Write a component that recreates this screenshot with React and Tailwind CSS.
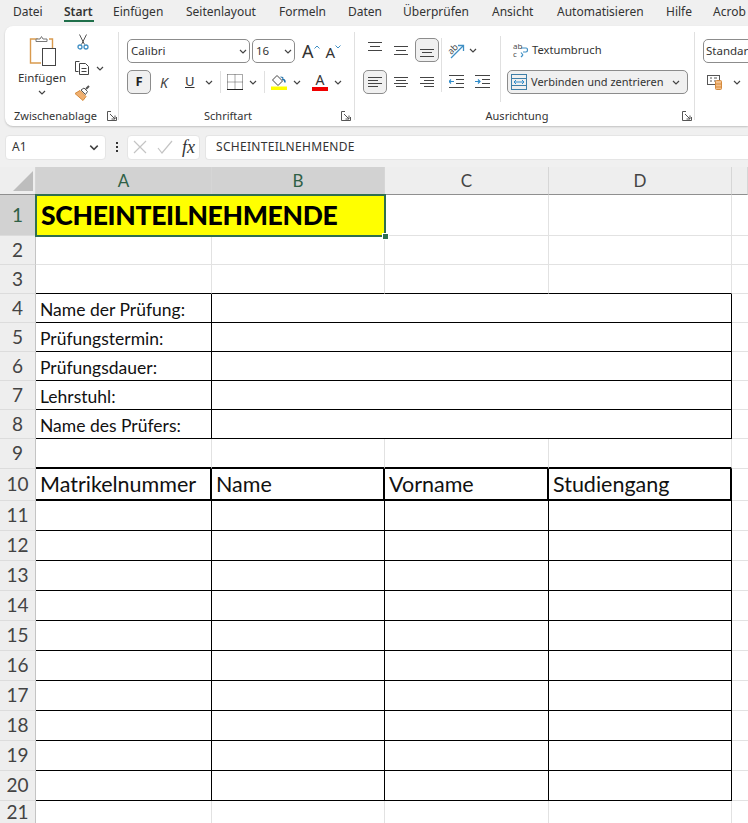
const TABS = [
  ["Datei", "w-[51px]"],
  ["Start", "w-[49px]"],
  ["Einfügen", "w-[73px]"],
  ["Seitenlayout", "w-[93px]"],
  ["Formeln", "w-[69px]"],
  ["Daten", "w-[55px]"],
  ["Überprüfen", "w-[89px]"],
  ["Ansicht", "w-[65px]"],
  ["Automatisieren", "w-[109px]"],
  ["Hilfe", "w-[47px]"],
  ["Acrob", "w-[35px]"],
];

const ROW_HEIGHTS = [41, 29, 29, 29, 29, 29, 29, 29, 30, 32, 30, 30, 30, 30, 30, 30, 30, 30, 30, 30, 23];

const Chevron = ({ className = "" }) => (
  <svg viewBox="0 0 8 5" className={`w-[8px] h-[5px] shrink-0 ${className}`} fill="none" stroke="#444" strokeWidth="1.2">
    <path d="M1 1l3 3 3-3" />
  </svg>
);

const Divider = ({ className = "" }) => <div className={`w-px bg-[#e0e0e0] ${className}`} />;

const Launcher = () => (
  <svg viewBox="0 0 10 10" className="w-[10px] h-[10px]" fill="none" stroke="#555" strokeWidth="1">
    <path d="M4 .5H.5v9h9V6" />
    <path d="M3 3l5 5M8 4.5V8H4.5" />
  </svg>
);

const Lines = ({ rows }) => (
  <svg viewBox="0 0 16 16" className="w-[16px] h-[16px]" stroke="#444" strokeWidth="1" fill="none">
    {rows.map((r, i) => (
      <path key={i} d={`M${r[0]} ${r[2]}.5H${r[1]}`} />
    ))}
  </svg>
);

const PasteIcon = () => (
  <svg viewBox="0 0 30 32" className="w-[30px] h-[32px]" fill="none">
    <path d="M9 4H1.5v24H12" stroke="#d99a4e" strokeWidth="1.4" />
    <path d="M20 4h3.5v9" stroke="#d99a4e" strokeWidth="1.4" />
    <path d="M7 6.5V4h4l1.5-2.500 1.500 2.500h4v2.500z" fill="#fff" stroke="#777" strokeWidth="1" />
    <rect x="13.500" y="13.500" width="13" height="17" fill="#fff" stroke="#444" />
  </svg>
);

const Scissors = () => (
  <svg viewBox="0 0 12 16" className="w-[12px] h-[16px]" fill="none">
    <path d="M2.500 .5l5 10M9.500 .5l-5 10" stroke="#555" strokeWidth="1" />
    <circle cx="3" cy="13" r="2" stroke="#3f8fc4" strokeWidth="1.300" />
    <circle cx="9" cy="13" r="2" stroke="#3f8fc4" strokeWidth="1.300" />
  </svg>
);

const CopyIcon = () => (
  <svg viewBox="0 0 16 16" className="w-[16px] h-[16px]" fill="none" stroke="#444" strokeWidth="1">
    <path d="M5.500 1.500h-4v10h3" />
    <path d="M5.500 3.500h6l3 3v8h-9z" fill="#fff" />
    <path d="M7.500 8.500h5M7.500 11.500h5" />
  </svg>
);

const BrushIcon = () => (
  <svg viewBox="0 0 17 16" className="w-[17px] h-[16px]" fill="none">
    <path d="M1 8.500l5-3 6 6-3 4z" fill="#f0b070" stroke="#d58a3c" />
    <path d="M7 5l3-2 3.500 3.500-2 3z" fill="#fff" stroke="#555" />
    <path d="M12 4l3-3" stroke="#555" strokeWidth="2" />
  </svg>
);

const BorderIcon = () => (
  <svg viewBox="0 0 16 16" className="w-[16px] h-[16px]" fill="none">
    <path d="M.5.5h15v15M.5.5v15M8 .5v15M.5 8h15" stroke="#555" strokeDasharray="1 1" />
    <path d="M0 15.500h16" stroke="#222" />
  </svg>
);

const FillIcon = () => (
  <svg viewBox="0 0 16 16" className="w-[16px] h-[16px]" fill="none">
    <path d="M6 1.500l5.500 5.500-4.500 4.500-5.500-5.500z" stroke="#444" />
    <path d="M12 5.500c1 0 2 1 2 3" stroke="#1f6fa8" strokeWidth="1.500" />
    <path d="M9.500 3l2.500.5-.5 2.500" stroke="#1f6fa8" />
    <rect y="12.500" width="16" height="3.500" fill="#ffff00" />
  </svg>
);

const OrientIcon = () => (
  <svg viewBox="0 0 17 17" className="w-[17px] h-[17px] overflow-visible" fill="none">
    <path d="M3 16L15 4" stroke="#3f8fc4" strokeWidth="1.300" />
    <path d="M10 3.500h5.500V9" stroke="#3f8fc4" strokeWidth="1.300" />
    <text x="0" y="11" fontSize="9" fill="#444" transform="rotate(-45 4 8)" fontFamily="Open Sans, sans-serif">ab</text>
  </svg>
);

const WrapIcon = () => (
  <svg viewBox="0 0 16 16" className="w-[16px] h-[16px] overflow-visible" fill="none">
    <path d="M10 10h3c2 0 2-4 0-4H8M10 13l-2-2.500M10 13l-2 2" stroke="#3f8fc4" strokeWidth="1.200" />
    <text x="0" y="7" fontSize="8" fill="#444" fontFamily="Open Sans, sans-serif">ab</text>
    <text x="0" y="15" fontSize="8" fill="#444" fontFamily="Open Sans, sans-serif">c</text>
  </svg>
);

const IndentIcon = ({ flip }) => (
  <svg viewBox="0 0 15 14" className="w-[15px] h-[14px]" fill="none" stroke="#444">
    <path d="M0 .5h15M7 4.500h8M7 8.500h8M0 12.500h15" />
    {flip ? (
      <path d="M0 6.500h5M3 4.500l2 2-2 2" stroke="#2f8ccb" strokeWidth="1.200" />
    ) : (
      <path d="M5 6.500H0M2 4.500l-2 2 2 2" stroke="#2f8ccb" strokeWidth="1.200" />
    )}
  </svg>
);

const MergeIcon = () => (
  <svg viewBox="0 0 16 16" className="w-[16px] h-[16px]" fill="none">
    <rect x=".5" y=".5" width="15" height="15" stroke="#3f7fa8" />
    <path d="M.5 4.500h15M.5 11.500h15" stroke="#3f7fa8" />
    <path d="M3 8h10M5 6L3 8l2 2M11 6l2 2-2 2" stroke="#2f8ccb" />
  </svg>
);

const StylesIcon = () => (
  <svg viewBox="0 0 16 16" className="w-[16px] h-[16px]" fill="none">
    <rect x=".5" y="1.500" width="12" height="9" fill="#fff" stroke="#555" />
    <path d="M3 4h2M3 7h2M7 4h3M7 7h2" stroke="#555" />
    <rect x="8.500" y="6.500" width="6" height="9" rx="1" fill="#f5c08a" stroke="#d58a3c" />
    <path d="M8.500 10h6M8.500 13h6" stroke="#d58a3c" />
  </svg>
);

const Ribbon = () => (
  <div className="flex h-[100px] ml-[5px] bg-white rounded-l-lg shadow-[0_1px_2px_rgba(0,0,0,0.2)] text-[#333]">
    {/* Zwischenablage */}
    <div className="flex flex-col w-[113px] shrink-0">
      <div className="flex h-[81px] pt-[8px] pl-[13px]">
        <div className="flex flex-col items-center w-[48px]">
          <div className="mt-[1px] ml-[3px]">
            <PasteIcon />
          </div>
          <span className="text-[11.5px] leading-[16px] mt-[3px] whitespace-nowrap">Einfügen</span>
          <Chevron className="mt-[4px]" />
        </div>
        <div className="flex flex-col ml-[8px] gap-[10px]">
          <div className="ml-[3px]"><Scissors /></div>
          <div className="flex items-center gap-[6px]">
            <CopyIcon />
            <Chevron />
          </div>
          <div className="mt-[-1px]"><BrushIcon /></div>
        </div>
      </div>
      <div className="flex items-center justify-between pl-[9px] pr-[1px]">
        <span className="text-[11px] leading-[18px]">Zwischenablage</span>
        <Launcher />
      </div>
    </div>
    <Divider className="h-[88px] mt-[6px]" />

    {/* Schriftart */}
    <div className="flex flex-col w-[235px] shrink-0">
      <div className="flex flex-col h-[81px] pt-[13px] pl-[8px]">
        <div className="flex items-center h-[24px]">
          <div className="flex items-center justify-between w-[123px] h-[24px] border border-[#8c8c8c] rounded-[5px] pl-[3px] pr-[2px] text-[11.5px]">
            Calibri
            <Chevron />
          </div>
          <div className="flex items-center justify-between w-[43px] h-[24px] ml-[2px] border border-[#8c8c8c] rounded-[5px] pl-[3px] pr-[2px] text-[11.5px]">
            16
            <Chevron />
          </div>
          <span className="ml-[7px] text-[18px] leading-none">A</span>
          <svg viewBox="0 0 6 4" className="w-[6px] h-[4px] mb-[9px]" fill="none" stroke="#3f8fc4">
            <path d="M.5 3.500L3 1l2.500 2.500" />
          </svg>
          <span className="ml-[6px] text-[15px] leading-none mt-[2px]">A</span>
          <svg viewBox="0 0 6 4" className="w-[6px] h-[4px] mb-[9px]" fill="none" stroke="#3f8fc4">
            <path d="M.5.5L3 3 5.500.5" />
          </svg>
        </div>
        <div className="flex items-center h-[24px] mt-[7px]">
          <div className="flex items-center justify-center w-[24px] h-[24px] bg-[#f0f0f0] border border-[#8c8c8c] rounded-[5px] text-[13px] font-bold text-[#222]">
            F
          </div>
          <span className="ml-[9px] w-[18px] text-[14px] italic text-[#444]">K</span>
          <span className="ml-[7px] w-[14px] text-[13px] underline text-[#333]">U</span>
          <Chevron className="ml-[6px]" />
          <Divider className="h-[22px] ml-[7px]" />
          <div className="ml-[6px]"><BorderIcon /></div>
          <Chevron className="ml-[6px]" />
          <Divider className="h-[22px] ml-[7px]" />
          <div className="ml-[6px]"><FillIcon /></div>
          <Chevron className="ml-[6px]" />
          <div className="flex flex-col items-center w-[16px] ml-[11px]">
            <span className="text-[14px] leading-[13px]">A</span>
            <div className="w-[16px] h-[4px] bg-[#f00000] mt-[1px]" />
          </div>
          <Chevron className="ml-[6px]" />
        </div>
      </div>
      <div className="relative flex items-center justify-center">
        <span className="text-[11px] leading-[18px] mr-[17px]">Schriftart</span>
        <div className="absolute right-[3px] top-[4px]"><Launcher /></div>
      </div>
    </div>
    <Divider className="h-[88px] mt-[6px]" />

    {/* Ausrichtung */}
    <div className="flex flex-col w-[339px] shrink-0">
      <div className="flex h-[81px] pt-[12px] pl-[8px]">
        <div className="flex flex-col gap-[8px]">
          <div className="flex items-center h-[24px]">
            <div className="flex justify-center w-[24px] mt-[-3px]">
              <Lines rows={[[1, 15, 1], [3, 13, 5], [1, 15, 9]]} />
            </div>
            <div className="flex justify-center w-[24px] ml-[2px]">
              <Lines rows={[[1, 15, 4], [3, 13, 8], [1, 15, 12]]} />
            </div>
            <div className="flex items-center justify-center w-[24px] h-[24px] ml-[2px] bg-[#f0f0f0] border border-[#8c8c8c] rounded-[5px]">
              <Lines rows={[[1, 15, 7], [3, 13, 10], [1, 15, 14]]} />
            </div>
          </div>
          <div className="flex items-center h-[24px]">
            <div className="flex items-center justify-center w-[24px] h-[24px] bg-[#f0f0f0] border border-[#8c8c8c] rounded-[5px]">
              <Lines rows={[[1, 15, 3], [1, 11, 6], [1, 15, 9], [1, 11, 12]]} />
            </div>
            <div className="flex justify-center w-[24px] ml-[2px]">
              <Lines rows={[[1, 15, 3], [3, 13, 6], [1, 15, 9], [3, 13, 12]]} />
            </div>
            <div className="flex justify-center w-[24px] ml-[2px]">
              <Lines rows={[[1, 15, 3], [5, 15, 6], [1, 15, 9], [5, 15, 12]]} />
            </div>
          </div>
        </div>
        <Divider className="h-[54px] ml-[2px]" />
        <div className="flex flex-col w-[58px] gap-[8px] pl-[6px]">
          <div className="flex items-center h-[24px] gap-[4px]">
            <OrientIcon />
            <Chevron />
          </div>
          <div className="flex items-center h-[24px] gap-[11px] ml-[1px]">
            <IndentIcon />
            <IndentIcon flip />
          </div>
        </div>
        <Divider className="h-[66px] mt-[-2px]" />
        <div className="flex flex-col gap-[8px] ml-[6px]">
          <div className="flex items-center h-[24px] pl-[6px] gap-[3px] text-[11.2px]">
            <WrapIcon />
            Textumbruch
          </div>
          <div className="flex items-center justify-between w-[181px] h-[24px] pl-[3px] pr-[7px] bg-[#f0f0f0] border border-[#8c8c8c] rounded-[5px] text-[11px] whitespace-nowrap">
            <span className="flex items-center gap-[4px]">
              <MergeIcon />
              Verbinden und zentrieren
            </span>
            <Chevron />
          </div>
        </div>
      </div>
      <div className="relative flex items-center justify-center">
        <span className="text-[11px] leading-[18px] mr-[15px]">Ausrichtung</span>
        <div className="absolute right-[2px] top-[4px]"><Launcher /></div>
      </div>
    </div>
    <Divider className="h-[88px] mt-[6px]" />

    {/* Zahl, am Rand abgeschnitten */}
    <div className="flex flex-col flex-1 min-w-0 overflow-hidden pl-[8px] pt-[13px]">
      <div className="flex items-center w-[100px] h-[24px] border border-[#8c8c8c] rounded-l-[5px] pl-[2px] text-[11.5px]">
        Standard
      </div>
      <div className="flex items-center gap-[10px] h-[24px] mt-[7px] pl-[4px]">
        <StylesIcon />
        <Chevron />
      </div>
    </div>
  </div>
);

const FormulaBar = () => (
  <div className="flex items-center h-[41px] pl-[5px] pt-[1px] text-[12px] text-[#333]">
    <div className="flex items-center justify-between w-[101px] h-[25px] pl-[6px] pr-[7px] bg-white border border-[#e5e5e5] rounded-[4px]">
      A1
      <Chevron className="scale-125" />
    </div>
    <div className="flex flex-col gap-[2px] ml-[10px]">
      <div className="w-[2px] h-[2px] bg-[#333]" />
      <div className="w-[2px] h-[2px] bg-[#333]" />
      <div className="w-[2px] h-[2px] bg-[#333]" />
    </div>
    <div className="flex items-center w-[73px] h-[25px] ml-[9px] pl-[5px] bg-white border border-[#e5e5e5] rounded-[4px]">
      <svg viewBox="0 0 40 14" className="w-[40px] h-[14px]" fill="none" stroke="#c4c4c4" strokeWidth="1.200">
        <path d="M1 1l12 12M13 1L1 13" />
        <path d="M25 8l4 5 10-12" />
      </svg>
      <span className="ml-[9px] text-[18px] italic leading-none text-[#333] font-['Liberation_Serif',serif]">fx</span>
    </div>
    <div className="flex items-center flex-1 h-[25px] ml-[5px] pl-[10px] bg-white border border-r-0 border-[#e5e5e5] rounded-l-[4px] tracking-[0.3px]">
      SCHEINTEILNEHMENDE
    </div>
  </div>
);

const ColHead = ({ label, selected }) => (
  <div
    className={`flex items-center justify-center border-r border-b border-r-[#d6d6d6] border-b-[#8f8f8f] text-[17px] ${
      selected ? "bg-[#d2d2d2] text-[#2f6046]" : "bg-[#eeeeee] text-[#444]"
    }`}
  >
    {label}
  </div>
);

const RowHead = ({ n, selected }) => (
  <div
    className={`flex items-center justify-center border-b border-r border-b-[#dcdcdc] border-r-[#c4c4c4] text-[19px] ${
      selected ? "bg-[#d2d2d2] text-[#2f6046]" : "bg-[#eeeeee] text-[#444]"
    }`}
  >
    {n}
  </div>
);

const Cell = ({ className = "", children }) => (
  <div className={`flex items-center overflow-hidden whitespace-nowrap border-r border-b border-[#e2e2e2] ${className}`}>
    {children}
  </div>
);

const Sheet = () => {
  const infoRows = ["Name der Prüfung:", "Prüfungstermin:", "Prüfungsdauer:", "Lehrstuhl:", "Name des Prüfers:"];
  const tableRows = [11, 12, 13, 14, 15, 16, 17, 18, 19, 20];
  const black = "border-b-black border-r-black";

  return (
    <div
      className="grid grid-cols-[36px_176px_173px_164px_183px_16px] h-[656px] overflow-hidden bg-white font-['Lato',sans-serif]"
      style={{ gridTemplateRows: `28px ${ROW_HEIGHTS.map((h) => `${h}px`).join(" ")}` }}
    >
      <div className="relative bg-[#eeeeee] border-r border-b border-r-[#d6d6d6] border-b-[#8f8f8f]">
        <svg viewBox="0 0 20 20" className="absolute left-[13px] top-[4px] w-[20px] h-[20px]">
          <path d="M20 0v20H0z" fill="#bdbdbd" />
        </svg>
      </div>
      <ColHead label="A" selected />
      <ColHead label="B" selected />
      <ColHead label="C" />
      <ColHead label="D" />
      <ColHead label="" />

      {/* Zeile 1 */}
      <RowHead n={1} selected />
      <div className="relative col-span-2 flex items-center pl-[5px] bg-[#ffff00] text-[26.5px] font-black text-black whitespace-nowrap tracking-[-0.3px]">
        SCHEINTEILNEHMENDE
        <div className="absolute -top-px -left-px -right-px -bottom-px border-2 border-[#2f6f4f]" />
        <div className="absolute right-[-4px] bottom-[-4px] w-[7px] h-[7px] bg-[#2f6f4f] border border-white" />
      </div>
      <Cell />
      <Cell />
      <Cell className="border-r-0" />

      {/* Zeile 2 und 3 */}
      <RowHead n={2} />
      <Cell /><Cell /><Cell /><Cell /><Cell className="border-r-0" />
      <RowHead n={3} />
      <Cell className="border-b-black" /><Cell className="border-b-black" /><Cell className="border-b-black" /><Cell className="border-b-black" /><Cell className="border-r-0" />

      {/* Zeile 4 bis 8 */}
      {infoRows.map((label, i) => (
        <div key={label} className="contents">
          <RowHead n={i + 4} />
          <Cell className={`${black} pl-[4px] pt-[4px] text-[17.5px] text-[#111]`}>{label}</Cell>
          <Cell className={`${black} col-span-3`} />
          <Cell className="border-r-0" />
        </div>
      ))}

      {/* Zeile 9 */}
      <RowHead n={9} />
      <Cell className="border-b-black border-b-2" /><Cell className="border-b-black border-b-2" /><Cell className="border-b-black border-b-2" /><Cell className="border-b-black border-b-2" /><Cell className="border-r-0" />

      {/* Zeile 10 */}
      <RowHead n={10} />
      {["Matrikelnummer", "Name", "Vorname", "Studiengang"].map((label) => (
        <Cell key={label} className="pl-[4px] text-[21.5px] text-[#111] border-b-2 border-r-2 border-b-black border-r-black">
          {label}
        </Cell>
      ))}
      <Cell className="border-r-0" />

      {/* Zeile 11 bis 20 */}
      {tableRows.map((n) => (
        <div key={n} className="contents">
          <RowHead n={n} />
          <Cell className={black} />
          <Cell className={black} />
          <Cell className={black} />
          <Cell className={black} />
          <Cell className="border-r-0" />
        </div>
      ))}

      {/* Zeile 21 */}
      <RowHead n={21} />
      <Cell className="border-b-0" /><Cell className="border-b-0" /><Cell className="border-b-0" /><Cell className="border-b-0" /><Cell className="border-b-0 border-r-0" />
    </div>
  );
};

export default function App() {
  return (
    <div className="w-[748px] h-[823px] overflow-hidden bg-[#f0f0f0] font-['Noto_Sans',sans-serif]">
      <div className="flex h-[26px] pl-[13px] text-[12px] text-[#333] whitespace-nowrap">
        {TABS.map(([label, width]) => (
          <div key={label} className={`relative shrink-0 pt-[3px] leading-[18px] ${width} ${label === "Start" ? "font-semibold" : ""}`}>
            {label}
            {label === "Start" && <div className="absolute left-0 top-[20px] w-[30px] h-[2px] bg-[#1f6f4a]" />}
          </div>
        ))}
      </div>
      <Ribbon />
      <FormulaBar />
      <Sheet />
    </div>
  );
}
